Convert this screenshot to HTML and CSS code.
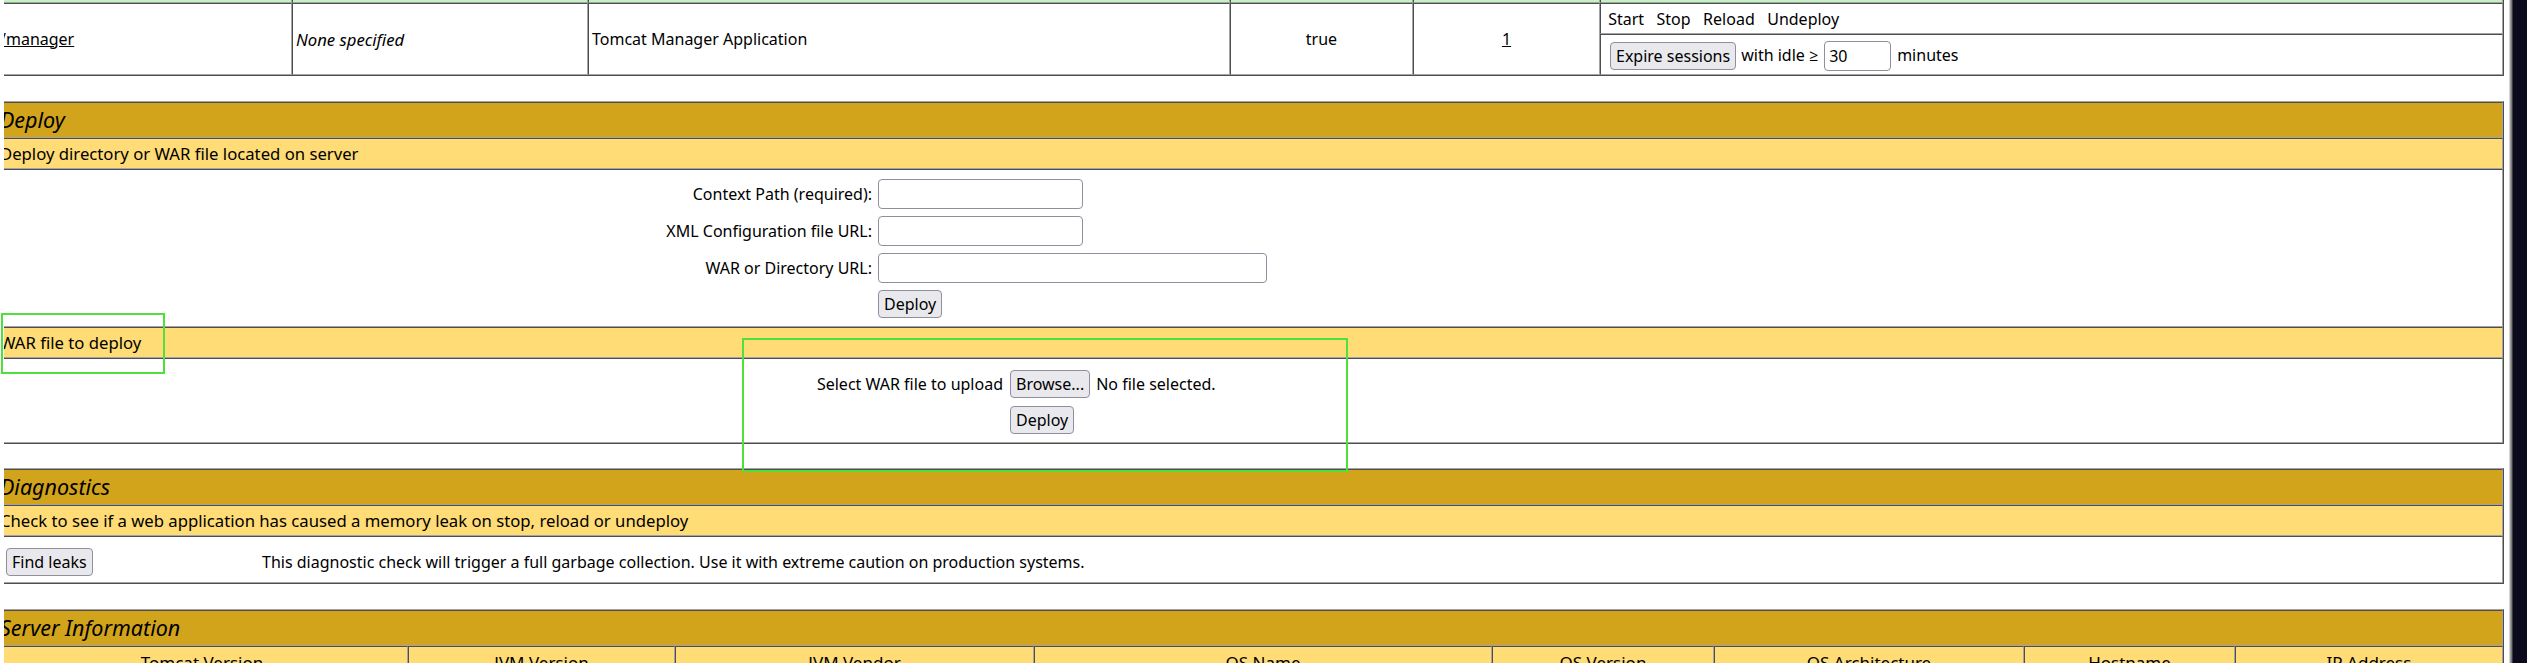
FILE: index.html
```html
<!DOCTYPE html>
<html lang="en">
<head>
<meta charset="utf-8">
<title>/manager</title>
<link rel="stylesheet" href="styles.css">
</head>
<body>
<div class="screen">
  <div class="gutter"></div>
  <div class="viewport">
    <div class="page">
      <div class="grid apps">
        <div class="cell prev"></div>
        <div class="cell prev"></div>
        <div class="cell prev"></div>
        <div class="cell prev"></div>
        <div class="cell prev"></div>
        <div class="cell prev"></div>
        <div class="cell app"><a class="link" href="#">/manager</a></div>
        <div class="cell app italic">None specified</div>
        <div class="cell app">Tomcat Manager Application</div>
        <div class="cell app center">true</div>
        <div class="cell app center"><a class="link" href="#">1</a></div>
        <div class="cell cmds">&nbsp;Start&nbsp; &nbsp;Stop&nbsp; &nbsp;Reload&nbsp; &nbsp;Undeploy&nbsp;</div>
        <div class="cell expire">
          <button class="btn exp-btn" type="button">Expire sessions</button>
          <span class="exp-text">with idle &ge;</span>
          <input class="input exp-input" type="text" value="30">
          <span class="exp-unit">minutes</span>
        </div>
      </div>

      <div class="grid panel deploy">
        <div class="cell title">Deploy</div>
        <div class="cell sub">Deploy directory or WAR file located on server</div>
        <div class="cell body">
          <form class="form form-server">
            <label class="lbl" for="deployPath">Context Path (required):</label>
            <input class="input in-20" id="deployPath" type="text">
            <label class="lbl" for="deployConfig">XML Configuration file URL:</label>
            <input class="input in-20" id="deployConfig" type="text">
            <label class="lbl" for="deployWar">WAR or Directory URL:</label>
            <input class="input in-40" id="deployWar" type="text">
            <span class="lbl"></span>
            <button class="btn" type="button">Deploy</button>
          </form>
        </div>
        <div class="cell sub">WAR file to deploy</div>
        <div class="cell body">
          <form class="form form-upload">
            <span class="lbl">Select WAR file to upload</span>
            <span class="file"><button class="btn" type="button">Browse...</button><span class="file-name">No file selected.</span></span>
            <span class="lbl"></span>
            <button class="btn" type="button">Deploy</button>
          </form>
        </div>
      </div>

      <div class="grid panel diag">
        <div class="cell title">Diagnostics</div>
        <div class="cell sub">Check to see if a web application has caused a memory leak on stop, reload or undeploy</div>
        <div class="cell body diag-body">
          <form class="diag-form"><button class="btn" type="button">Find leaks</button></form>
          <span>This diagnostic check will trigger a full garbage collection. Use it with extreme caution on production systems.</span>
        </div>
      </div>

      <div class="grid panel server">
        <div class="cell title">Server Information</div>
        <div class="cell head">Tomcat Version</div>
        <div class="cell head">JVM Version</div>
        <div class="cell head">JVM Vendor</div>
        <div class="cell head">OS Name</div>
        <div class="cell head">OS Version</div>
        <div class="cell head">OS Architecture</div>
        <div class="cell head">Hostname</div>
        <div class="cell head">IP Address</div>
      </div>
    </div>
  </div>
  <div class="frame"></div>
  <div class="desk"></div>
  <div class="mark mark-war-head"></div>
  <div class="mark mark-war-form"></div>
</div>
</body>
</html>
```

FILE: styles.css
```css
html, body {
  margin: 0;
  padding: 0;
}

body {
  background: #0b0a1d;
  font-family: "Noto Sans", "Open Sans", sans-serif;
  font-size: 16px;
  color: #000;
}

.screen {
  position: relative;
  display: flex;
  width: 2527px;
  height: 663px;
  overflow: hidden;
}

.gutter {
  flex: none;
  width: 4px;
  background: #fff;
}

.viewport {
  flex: none;
  width: 2505px;
  height: 663px;
  overflow: hidden;
  background: #fff;
}

.page {
  margin-left: -9px;
  width: 2509px;
}

.frame {
  flex: none;
  width: 4px;
  background: linear-gradient(to right, #d4d4d4 0 1px, #9a9a9a 1px 2px, #7a7a7a 2px 3px, #3a3a44 3px 4px);
}

.desk {
  flex: 1;
  background: #0b0a1d;
}

/* table-like grids */
.grid {
  display: grid;
  box-sizing: border-box;
  width: 2509px;
  border: 1px solid;
  border-color: #a3a3a3 #4e4e4e #4e4e4e #a3a3a3;
}

.cell {
  border: 1px solid;
  border-color: #4e4e4e #a3a3a3 #a3a3a3 #4e4e4e;
  padding: 0 3px;
  line-height: 23px;
  white-space: nowrap;
  min-width: 0;
}

/* applications list */
.apps {
  grid-template-columns: 296px 296px 642px 183px 187px 903px;
  grid-template-rows: 4px 31px 41px;
  margin-top: -2px;
}

.prev {
  background: #c3f3c3;
  padding: 0;
}

.app {
  grid-row: span 2;
  display: flex;
  align-items: center;
}

.app.center {
  justify-content: center;
}

.italic {
  font-style: italic;
  font-size: 16.7px;
}

.link {
  color: #000;
  text-decoration: underline;
}

.cmds {
  padding-top: 4px;
  padding-bottom: 2px;
}

.expire {
  display: flex;
  align-items: center;
  padding: 4px 3px 2px;
}

.exp-btn {
  margin-left: 6px;
}

.exp-text {
  margin-left: 5px;
}

.exp-input {
  width: 67px;
  height: 29px;
  margin-left: 6px;
}

.exp-unit {
  margin-left: 6px;
}

/* controls */
.btn {
  box-sizing: border-box;
  height: 28px;
  padding: 0 5px;
  border: 1px solid #8f8f9d;
  border-radius: 4px;
  background: #e9e9ed;
  color: #000;
  font-family: "Noto Sans", "Open Sans", sans-serif;
  font-size: 16px;
  line-height: 26px;
  white-space: nowrap;
}

.input {
  box-sizing: border-box;
  height: 30px;
  padding: 0 4px;
  border: 1px solid #8f8f9d;
  border-radius: 4px;
  background: #fff;
  color: #000;
  font-family: "Noto Sans", "Open Sans", sans-serif;
  font-size: 16px;
}

/* panels */
.title {
  background: #d2a41c;
  font-style: italic;
  font-size: 21.5px;
  line-height: 28px;
  padding: 3px;
}

.sub {
  background: #ffdc75;
  padding: 3px;
  font-size: 16.7px;
}

.deploy {
  margin-top: 25px;
}

.diag {
  margin-top: 24px;
}

.server {
  margin-top: 25px;
  grid-template-columns: 412px 267px 359px 458px 222px 310px 211px 268px;
}

.server .title {
  grid-column: 1 / -1;
}

.head {
  background: #ffdc75;
  text-align: center;
  padding: 4px 3px 3px;
  font-size: 17px;
}

/* forms */
.form {
  display: grid;
  column-gap: 6px;
  row-gap: 7px;
  align-items: center;
  justify-items: start;
  margin: 0;
}

.form-server {
  grid-template-columns: 872px auto;
  grid-template-rows: 30px 30px 30px 28px;
  padding: 9px 0 8px;
}

.form-upload {
  grid-template-columns: 1003px auto;
  column-gap: 7px;
  grid-template-rows: 30px 28px;
  padding: 10px 0 8px;
}

.lbl {
  justify-self: end;
}

.in-20 {
  width: 205px;
}

.in-40 {
  width: 389px;
}

.file {
  display: flex;
  align-items: center;
}

.file-name {
  margin-left: 6px;
}

.diag-body {
  display: grid;
  grid-template-columns: 262px auto;
  align-items: center;
  padding: 11px 3px 6px;
}

.diag-form {
  display: flex;
  margin: 0;
}

.diag-form .btn {
  margin-left: 6px;
}

/* annotation boxes drawn over the page */
.mark {
  position: absolute;
  box-sizing: border-box;
  border: 2px solid #4fe03b;
  pointer-events: none;
}

.mark-war-head {
  left: 1px;
  top: 313px;
  width: 164px;
  height: 61px;
}

.mark-war-form {
  left: 742px;
  top: 338px;
  width: 606px;
  height: 134px;
}
```
